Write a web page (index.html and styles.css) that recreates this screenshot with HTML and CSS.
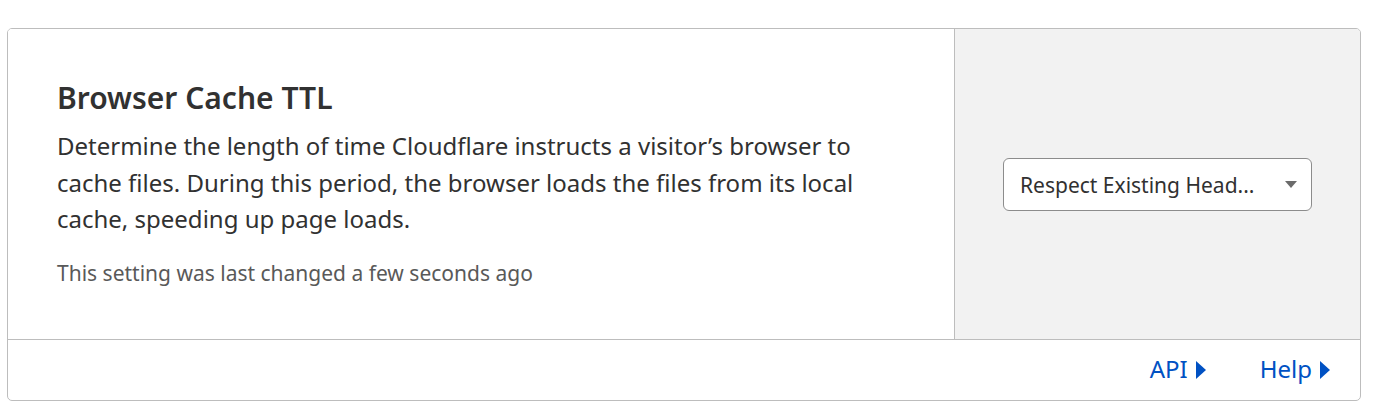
FILE: index.html
```html
<!DOCTYPE html>
<html>
<head>
<meta charset="utf-8">
<link rel="stylesheet" href="styles.css">
</head>
<body>
<div class="card">
  <div class="card-main">
    <div class="content">
      <h3 class="title">Browser Cache TTL</h3>
      <p class="desc">Determine the length of time Cloudflare instructs a visitor’s browser to cache files. During this period, the browser loads the files from its local cache, speeding up page loads.</p>
      <p class="meta">This setting was last changed a few seconds ago</p>
    </div>
    <div class="control">
      <div class="select">
        <span class="select-value">Respect Existing Head...</span>
        <svg class="caret" width="12" height="7" viewBox="0 0 12 7"><path d="M0 0H12L6 7Z" fill="#6b6b6b"/></svg>
      </div>
    </div>
  </div>
  <div class="card-footer">
    <a class="link">API<svg class="arrow" width="10" height="18" viewBox="0 0 10 18"><path d="M0 0L10 9L0 18Z" fill="#0051c3"/></svg></a>
    <a class="link">Help<svg class="arrow" width="10" height="18" viewBox="0 0 10 18"><path d="M0 0L10 9L0 18Z" fill="#0051c3"/></svg></a>
  </div>
</div>
</body>
</html>
```
FILE: styles.css
```css
html, body {
  margin: 0;
  padding: 0;
  background: #ffffff;
}
body {
  font-family: "Noto Sans", "Open Sans", sans-serif;
  color: #313131;
  padding: 28px 0 0 7px;
}
.card {
  width: 1354px;
  height: 373px;
  box-sizing: border-box;
  border: 1px solid #bdbdbd;
  border-radius: 5px;
  overflow: hidden;
  display: flex;
  flex-direction: column;
}
.card-main {
  display: flex;
  height: 311px;
  border-bottom: 1px solid #bdbdbd;
  box-sizing: border-box;
}
.content {
  width: 947px;
  box-sizing: border-box;
  padding: 49px 0 0 49px;
  border-right: 1px solid #bdbdbd;
  background: #fff;
}
.title {
  margin: 0;
  font-size: 30px;
  font-weight: 600;
  line-height: 40px;
  color: #313131;
}
.desc {
  margin: 10px 0 0;
  width: 830px;
  font-size: 24px;
  line-height: 36.5px;
  color: #313131;
}
.meta {
  margin: 20px 0 0;
  font-size: 21px;
  line-height: 30px;
  color: #595959;
}
.control {
  flex: 1;
  background: #f2f2f2;
  display: flex;
  align-items: center;
  justify-content: flex-start;
  padding-left: 48px;
  padding-top: 1px;
}
.select {
  width: 309px;
  height: 53px;
  box-sizing: border-box;
  background: #fff;
  border: 1px solid #8c8c8c;
  border-radius: 6px;
  display: flex;
  align-items: center;
  justify-content: space-between;
  padding: 0 14px 0 16px;
}
.select-value {
  font-size: 21px;
  color: #313131;
}
.caret {
  display: block;
}
.card-footer {
  flex: 1;
  display: flex;
  justify-content: flex-end;
  align-items: center;
  gap: 54px;
  padding-right: 30px;
  padding-bottom: 3px;
}
.link {
  color: #0051c3;
  font-size: 24px;
  display: flex;
  align-items: center;
  gap: 8px;
  text-decoration: none;
}
.arrow {
  display: block;
  margin-top: 2px;
}
```
